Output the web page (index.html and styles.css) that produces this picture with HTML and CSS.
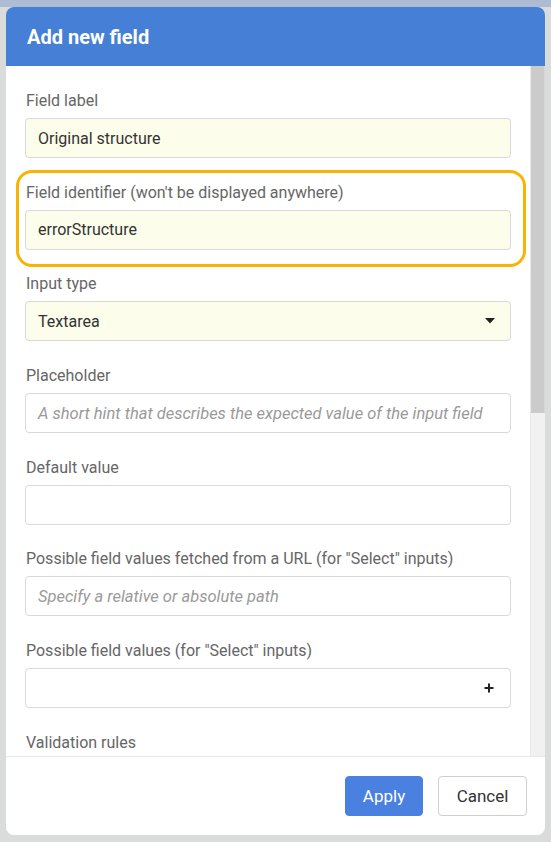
FILE: index.html
```html
<!DOCTYPE html>
<html lang="en">
<head>
<meta charset="utf-8">
<title>Add new field</title>
<link rel="stylesheet" href="styles.css">
</head>
<body>
<div class="modal">
  <div class="modal-header">Add new field</div>
  <div class="modal-body">
    <form class="form">
      <div class="field">
        <label class="label">Field label</label>
        <div class="input filled">Original structure</div>
      </div>
      <div class="field highlighted">
        <label class="label">Field identifier (won't be displayed anywhere)</label>
        <div class="input filled">errorStructure</div>
      </div>
      <div class="field">
        <label class="label">Input type</label>
        <div class="input filled select">
          <span>Textarea</span>
          <svg class="caret" width="10" height="6" viewBox="0 0 10 6"><path d="M0 0H10L5 5.5Z" fill="#222"/></svg>
        </div>
      </div>
      <div class="field">
        <label class="label">Placeholder</label>
        <div class="input placeholder">A short hint that describes the expected value of the input field</div>
      </div>
      <div class="field">
        <label class="label">Default value</label>
        <div class="input"></div>
      </div>
      <div class="field">
        <label class="label">Possible field values fetched from a URL (for "Select" inputs)</label>
        <div class="input placeholder">Specify a relative or absolute path</div>
      </div>
      <div class="field">
        <label class="label">Possible field values (for "Select" inputs)</label>
        <div class="input select">
          <span></span>
          <svg class="plus" width="10" height="10" viewBox="0 0 10 10"><path d="M5 0.5V9.5M0.5 5H9.5" stroke="#222" stroke-width="2"/></svg>
        </div>
      </div>
      <div class="field">
        <label class="label">Validation rules</label>
      </div>
    </form>
    <div class="scrollbar" aria-hidden="true"><div class="thumb"></div></div>
  </div>
  <div class="modal-footer">
    <button class="btn btn-primary" type="button">Apply</button>
    <button class="btn btn-default" type="button">Cancel</button>
  </div>
</div>
</body>
</html>
```
FILE: styles.css
```css
* { box-sizing: border-box; }
html, body { height: 100%; }
body {
  margin: 0;
  padding: 7px 6px 7px 6px;
  background: linear-gradient(#adbbd3 0, #adbbd3 7px, #dadcdc 7px);
  font-family: Roboto, "Liberation Sans", Arial, sans-serif;
}
.modal {
  height: 828px;
  display: flex;
  flex-direction: column;
  background: #fff;
  border-radius: 8px;
  overflow: hidden;
}
.modal-header {
  flex: 0 0 59px;
  display: flex;
  align-items: center;
  padding-left: 21px;
  background: #457fd6;
  color: #fff;
  font-size: 20px;
  font-weight: 700;
}
.modal-body {
  flex: 1 1 auto;
  min-height: 0;
  display: flex;
}
.form {
  flex: 1 1 auto;
  min-width: 0;
  overflow: hidden;
  padding: 26px 19px 0 19px;
}
.scrollbar {
  flex: 0 0 15px;
  background: #f1f1f1;
  border-left: 1px solid #e9e9e9;
}
.thumb {
  height: 347px;
  background: #cbcbcb;
  border-right: 1px solid #d6d6d6;
}
.field {
  position: relative;
  margin-bottom: 25.7px;
}
.highlighted::after {
  content: "";
  position: absolute;
  top: -14px;
  left: -9px;
  right: -15px;
  bottom: -17px;
  border: 3px solid #f8b400;
  border-radius: 16px;
  pointer-events: none;
}
.label {
  display: block;
  margin: 0 0 8px 1px;
  font-size: 16px;
  line-height: 18px;
  color: #666;
}
.input {
  height: 40px;
  display: flex;
  align-items: center;
  justify-content: space-between;
  padding: 0 12px;
  border: 1px solid #d9d9d9;
  border-radius: 4px;
  background: #fff;
  font-size: 16px;
  color: #333;
}
.filled { background: #fdfdec; }
.placeholder { color: #9a9a9a; font-style: italic; font-size: 16.5px; white-space: nowrap; }
.caret { margin-right: 3px; }
.plus { margin-right: 4px; }
.modal-footer {
  flex: 0 0 79px;
  display: flex;
  align-items: center;
  justify-content: flex-end;
  gap: 15px;
  padding: 0 18px 1px 0;
  border-top: 1px solid #e8e8e8;
}
.btn {
  height: 40px;
  border-radius: 4px;
  font-family: Roboto, "Liberation Sans", Arial, sans-serif;
  font-size: 17px;
  padding: 0 16px;
  cursor: pointer;
}
.btn-primary {
  width: 78px;
  background: #4a80e0;
  border: 1px solid #4a80e0;
  color: #fff;
}
.btn-default {
  width: 89px;
  background: #fff;
  border: 1px solid #cfcfcf;
  color: #333;
}
```
